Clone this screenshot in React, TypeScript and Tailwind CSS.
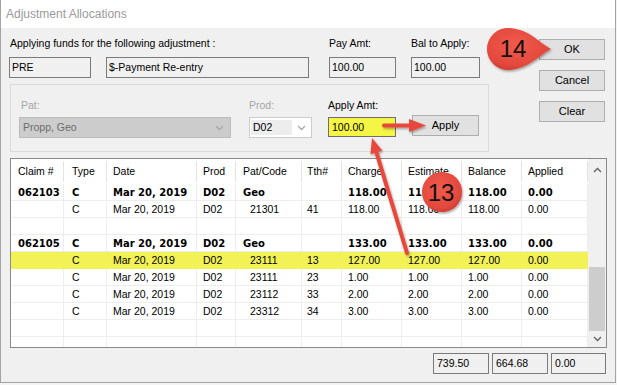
import React from "react";

type Row = {
  bold?: boolean;
  yellow?: boolean;
  code?: boolean;
  cells: string[];
};

const rows: Row[] = [
  { bold: true, cells: ["062103", "C", "Mar 20, 2019", "D02", "Geo", "", "118.00", "118.00", "118.00", "0.00"] },
  { code: true, cells: ["", "C", "Mar 20, 2019", "D02", "21301", "41", "118.00", "118.00", "118.00", "0.00"] },
  { cells: ["", "", "", "", "", "", "", "", "", ""] },
  { bold: true, cells: ["062105", "C", "Mar 20, 2019", "D02", "Geo", "", "133.00", "133.00", "133.00", "0.00"] },
  { yellow: true, code: true, cells: ["", "C", "Mar 20, 2019", "D02", "23111", "13", "127.00", "127.00", "127.00", "0.00"] },
  { code: true, cells: ["", "C", "Mar 20, 2019", "D02", "23111", "23", "1.00", "1.00", "1.00", "0.00"] },
  { code: true, cells: ["", "C", "Mar 20, 2019", "D02", "23112", "33", "2.00", "2.00", "2.00", "0.00"] },
  { code: true, cells: ["", "C", "Mar 20, 2019", "D02", "23312", "34", "3.00", "3.00", "3.00", "0.00"] },
  { cells: ["", "", "", "", "", "", "", "", "", ""] },
  { cells: ["", "", "", "", "", "", "", "", "", ""] },
];

const headers = ["Claim #", "Type", "Date", "Prod", "Pat/Code", "Tth#", "Charge", "Estimate", "Balance", "Applied"];
const pads = ["pl-[7px]", "pl-[8px]", "pl-[6px]", "pl-[6px]", "pl-[7px]", "pl-[5px]", "pl-[6px]", "pl-[6px]", "pl-[6px]", "pl-[6px]"];

const gridCols = "grid grid-cols-[53px_43px_90px_39px_66px_40px_60px_60px_60px_66px]";

function Chevron({ up, color = "#606060" }: { up?: boolean; color?: string }) {
  return (
    <svg width="9" height="6" viewBox="0 0 9 6">
      <polyline
        points={up ? "1,5 4.5,1.5 8,5" : "1,1 4.5,4.5 8,1"}
        fill="none"
        stroke={color}
        strokeWidth="1.3"
      />
    </svg>
  );
}

function Box({ w, text, cls = "" }: { w: string; text: string; cls?: string }) {
  return (
    <div className={`${w} h-[21px] border border-[#7a7a7a] flex items-center pl-[2px] text-black ${cls}`}>
      {text}
    </div>
  );
}

function Btn({ label, cls = "" }: { label: string; cls?: string }) {
  return (
    <div className={`h-[21px] bg-[#e1e1e1] border border-[#adadad] flex items-center justify-center text-black text-[11px] ${cls}`}>
      {label}
    </div>
  );
}

export default function App() {
  return (
    <div className="w-[617px] h-[385px] relative overflow-hidden bg-[#f4f4f4] font-['Liberation_Sans',Arial,sans-serif] text-[10.5px] leading-[13px]">
      <div className="w-[616px] h-[383px] border-l border-r border-b border-[#a3a3a3] bg-[#f0f0f0] flex flex-col">
        {/* Title bar */}
        <div className="h-[28px] bg-white flex items-center pl-[5px] shrink-0">
          <span className="text-[12px] text-[#9a9a9a]">Adjustment Allocations</span>
        </div>

        {/* Top section */}
        <div className="flex h-[130px] shrink-0">
          <div className="flex flex-col ml-[8px] w-[480px]">
            <div className="flex mt-[9px] h-[13px] text-black">
              <div className="w-[320px] pl-[1px]">Applying funds for the following adjustment :</div>
              <div className="w-[82px]">Pay Amt:</div>
              <div>Bal to Apply:</div>
            </div>
            <div className="flex mt-[7px]">
              <Box w="w-[82px]" text="PRE" />
              <Box w="w-[203px]" text="$-Payment Re-entry" cls="ml-[15px]" />
              <Box w="w-[67px]" text="100.00" cls="ml-[20px]" />
              <Box w="w-[69px]" text="100.00" cls="ml-[15px]" />
            </div>
            <div className="mt-[6px] ml-[1px] w-[479px] h-[68px] border border-[#dadada] flex items-start pl-[8px] pt-[14px]">
              <div className="flex flex-col w-[212px]">
                <div className="h-[13px] pl-[2px] text-[#a6a6a6]">Pat:</div>
                <div className="mt-[5px] h-[21px] bg-[#cccccc] border border-[#bdbdbd] flex items-center justify-between pl-[3px] pr-[6px] text-[#6d6d6d]">
                  <span>Propp, Geo</span>
                  <Chevron color="#a8a8a8" />
                </div>
              </div>
              <div className="flex flex-col w-[63px] ml-[18px]">
                <div className="h-[13px] text-[#a6a6a6]">Prod:</div>
                <div className="mt-[5px] h-[21px] bg-white border border-[#cccccc] flex items-center pl-[1px] pr-[5px]">
                  <div className="w-[41px] h-[15px] bg-[#ededed] flex items-center pl-[2px] text-black">D02</div>
                  <div className="ml-auto">
                    <Chevron color="#a8a8a8" />
                  </div>
                </div>
              </div>
              <div className="flex flex-col w-[68px] ml-[16px]">
                <div className="h-[13px] text-black">Apply Amt:</div>
                <div className="mt-[5px] h-[20px] bg-[#f5f545] border border-[#6e6e6e] flex items-center pl-[3px] text-black">100.00</div>
              </div>
              <Btn label="Apply" cls="w-[67px] ml-[16px] mt-[16px]" />
            </div>
          </div>
          <div className="flex flex-col ml-[50px] mt-[11px] gap-[10px] w-[66px]">
            <Btn label="OK" />
            <Btn label="Cancel" />
            <Btn label="Clear" />
          </div>
        </div>

        {/* Table */}
        <div className="ml-[9px] w-[597px] h-[190px] border border-[#8a8a8a] bg-white flex shrink-0">
          <div className="w-[577px] flex flex-col">
            <div className={`${gridCols} h-[25px] shrink-0`}>
              {headers.map((h, i) => (
                <div key={i} className={`${pads[i]} flex items-center border-r border-[#e3e3e3] my-[2px] text-black`}>
                  {h}
                </div>
              ))}
            </div>
            <div className="h-[163px] overflow-hidden">
              {rows.map((r, ri) => (
                <div key={ri} className={`${gridCols} h-[17px] ${r.yellow ? "bg-[#f2f257]" : ""}`}>
                  {r.cells.map((c, ci) => {
                    const pad = ci === 4 && r.code ? "pl-[14px]" : pads[ci];
                    const border = r.yellow ? "border-[#f2f257]" : "border-[#ededed]";
                    const font = r.bold
                      ? "font-['DejaVu_Sans',sans-serif] font-bold text-[10px]"
                      : "";
                    return (
                      <div key={ci} className={`${pad} ${border} ${font} border-r border-b flex items-center text-black whitespace-nowrap`}>
                        {c}
                      </div>
                    );
                  })}
                </div>
              ))}
            </div>
          </div>
          {/* Scrollbar */}
          <div className="w-[18px] flex flex-col bg-[#f0f0f0] pl-[1px] pr-[1px]">
            <div className="h-[21px] flex items-center justify-center shrink-0">
              <Chevron up />
            </div>
            <div className="h-[87px] shrink-0" />
            <div className="h-[64px] bg-[#cdcdcd] shrink-0" />
            <div className="flex-1 flex items-center justify-center">
              <Chevron />
            </div>
          </div>
        </div>

        {/* Footer totals */}
        <div className="flex ml-[432px] mt-[5px] gap-[3px]">
          <Box w="w-[56px]" text="739.50" cls="pl-[3px]" />
          <Box w="w-[56px]" text="664.68" cls="pl-[3px]" />
          <Box w="w-[55px]" text="0.00" cls="pl-[3px]" />
        </div>
      </div>

      {/* Annotations overlay */}
      <svg className="absolute left-0 top-0 pointer-events-none" width="617" height="385" viewBox="0 0 617 385">
        <defs>
          <radialGradient id="badge" cx="0.45" cy="0.4" r="0.65">
            <stop offset="0" stopColor="#f05a4c" />
            <stop offset="0.75" stopColor="#e4493d" />
            <stop offset="1" stopColor="#c93a30" />
          </radialGradient>
          <filter id="sh" x="-20%" y="-20%" width="140%" height="140%">
            <feDropShadow dx="1" dy="1.5" stdDeviation="1.2" floodColor="#000" floodOpacity="0.35" />
          </filter>
        </defs>
        {/* Arrow to Apply */}
        <g filter="url(#sh)" fill="#e8473b" stroke="none">
          <line x1="384" y1="125.5" x2="411" y2="125.5" stroke="#e8473b" strokeWidth="4" strokeLinecap="round" />
          <polygon points="426,125.5 409,119 409,132" />
        </g>
        {/* Arrow from row up to Apply Amt */}
        <g filter="url(#sh)" fill="#e8473b">
          <line x1="407" y1="253" x2="376.4" y2="152.4" stroke="#e8473b" strokeWidth="4" strokeLinecap="round" />
          <polygon points="372,138 382.3,150.6 370.4,154.2" />
        </g>
        {/* Badge 13 */}
        <g filter="url(#sh)">
          <circle cx="442" cy="192" r="20" fill="url(#badge)" />
        </g>
        <text x="441" y="200.5" textAnchor="middle" fontSize="24" fontFamily="Liberation Sans, Arial, sans-serif" fill="#111">13</text>
        {/* Badge 14 teardrop */}
        <g filter="url(#sh)">
          <path
            d="M551,49 C538,42 530,30 510,28.1 A21,21 0 1 0 510,69.9 C530,68 538,56 551,49 Z"
            fill="url(#badge)"
          />
        </g>
        <text x="513" y="57" textAnchor="middle" fontSize="24" fontFamily="Liberation Sans, Arial, sans-serif" fill="#111">14</text>
      </svg>
    </div>
  );
}
